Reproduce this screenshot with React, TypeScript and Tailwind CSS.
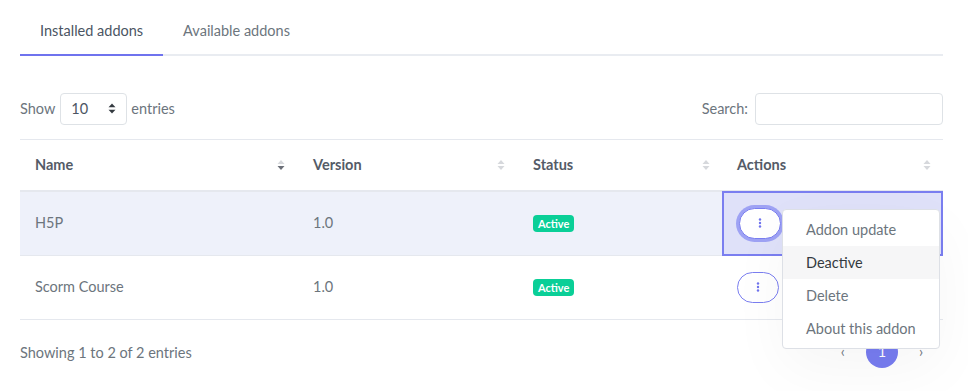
import React from 'react';

const rows = [
  { name: 'H5P', version: '1.0', status: 'Active' },
  { name: 'Scorm Course', version: '1.0', status: 'Active' },
];

function SortIcon({ active }: { active?: boolean }) {
  return (
    <svg width="8" height="12" viewBox="0 0 8 12" className="flex-shrink-0">
      <path d="M4 1 L7.5 5 H0.5 Z" fill="#d6d8dc" />
      <path d="M4 11 L7.5 7 H0.5 Z" fill={active ? '#6b6f78' : '#d6d8dc'} />
    </svg>
  );
}

function DotsButton({ focused }: { focused?: boolean }) {
  return (
    <button
      className={`flex items-center justify-center w-[42px] h-[31px] rounded-full border border-[#7a7ef0] bg-white ${
        focused ? 'ring-[3px] ring-[#9ea2f4]' : ''
      }`}
    >
      <svg width="4" height="12" viewBox="0 0 4 12">
        <circle cx="2" cy="2.5" r="1.2" fill="#6f73ee" />
        <circle cx="2" cy="6" r="1.2" fill="#6f73ee" />
        <circle cx="2" cy="9.5" r="1.2" fill="#6f73ee" />
      </svg>
    </button>
  );
}

export default function App() {
  return (
    <div
      className="w-[968px] h-[391px] bg-white overflow-hidden relative text-[#6c757d] text-[14.5px]"
      style={{ fontFamily: 'Lato, "Open Sans", sans-serif' }}
    >
      <div className="px-5">
        {/* tabs */}
        <div className="flex w-[923px] border-b-2 border-[#e9ecf1] pt-[20px]">
          <div className="px-5 pb-[12px] text-[#4b5563] border-b-2 border-[#6f73ee] -mb-[2px]">
            Installed addons
          </div>
          <div className="px-5 pb-[12px] text-[#6c757d]">Available addons</div>
        </div>

        {/* show / search */}
        <div className="flex items-center justify-between w-[923px] mt-[37px] h-[32px]">
          <div className="flex items-center">
            <span>Show</span>
            <div className="ml-[5px] flex items-center justify-between w-[67px] h-[32px] border border-[#dee2e6] rounded px-[10px] text-[#4b5563]">
              <span>10</span>
              <svg width="8" height="11" viewBox="0 0 8 11">
                <path d="M4 0.5 L7.5 4.3 H0.5 Z" fill="#343a40" />
                <path d="M4 10.5 L7.5 6.7 H0.5 Z" fill="#343a40" />
              </svg>
            </div>
            <span className="ml-[4px]">entries</span>
          </div>
          <div className="flex items-center">
            <span>Search:</span>
            <div className="ml-[7px] w-[188px] h-[32px] border border-[#dee2e6] rounded" />
          </div>
        </div>

        {/* table */}
        <div className="w-[923px] mt-[14px] border-t border-[#e5e8ee]">
          <div className="flex h-[52px] items-center border-b-2 border-[#e5e8ee] font-bold text-[#545b67]">
            <div className="w-[277px] flex items-center justify-between pl-[15px] pr-[12px]">
              <span>Name</span>
              <SortIcon active />
            </div>
            <div className="w-[220px] flex items-center justify-between pl-[16px] pr-[12px]">
              <span>Version</span>
              <SortIcon />
            </div>
            <div className="w-[205px] flex items-center justify-between pl-[16px] pr-[12px]">
              <span>Status</span>
              <SortIcon />
            </div>
            <div className="w-[221px] flex items-center justify-between pl-[15px] pr-[12px]">
              <span>Actions</span>
              <SortIcon />
            </div>
          </div>

          {rows.map((r, i) => (
            <div
              key={r.name}
              className={`flex h-[64px] items-stretch border-b border-[#e5e8ee] ${
                i === 0 ? 'bg-[#eef1fa]' : 'bg-white'
              }`}
            >
              <div className="w-[277px] flex items-center pl-[15px]">{r.name}</div>
              <div className="w-[220px] flex items-center pl-[16px]">{r.version}</div>
              <div className="w-[205px] flex items-center pl-[16px]">
                <span className="bg-[#0acf97] text-white text-[11px] font-bold leading-none px-[5px] py-[3px] rounded-[4px]">
                  {r.status}
                </span>
              </div>
              <div
                className={`w-[221px] flex items-center pl-[15px] ${
                  i === 0 ? 'bg-[#dfe1f9] border-2 border-[#7a7ef0] -mt-[1px] -mb-[1px] pl-[13px]' : ''
                }`}
              >
                <DotsButton focused={i === 0} />
              </div>
            </div>
          ))}
        </div>

        {/* footer */}
        <div className="flex items-center justify-between w-[923px] mt-[16px]">
          <span className="mt-[3px]">Showing 1 to 2 of 2 entries</span>
          <div className="flex items-center gap-[21px] mr-[20px] text-[#6c757d]">
            <span>‹</span>
            <span className="w-[32px] h-[32px] rounded-full bg-[#777cf0] text-white flex items-center justify-center">
              1
            </span>
            <span>›</span>
          </div>
        </div>
      </div>

      {/* dropdown menu */}
      <div className="absolute left-[782px] top-[209px] w-[158px] py-[3px] bg-white border border-[#dde0e6] rounded-[4px] shadow-[0_20px_60px_rgba(0,0,0,0.04)]">
        <div className="h-[33px] flex items-center pl-[23px] text-[#6c757d]">Addon update</div>
        <div className="h-[33px] flex items-center pl-[23px] text-[#343a40] bg-[#f6f6f7]">Deactive</div>
        <div className="h-[33px] flex items-center pl-[23px] text-[#6c757d]">Delete</div>
        <div className="h-[33px] flex items-center pl-[23px] text-[#6c757d]">About this addon</div>
      </div>
    </div>
  );
}
